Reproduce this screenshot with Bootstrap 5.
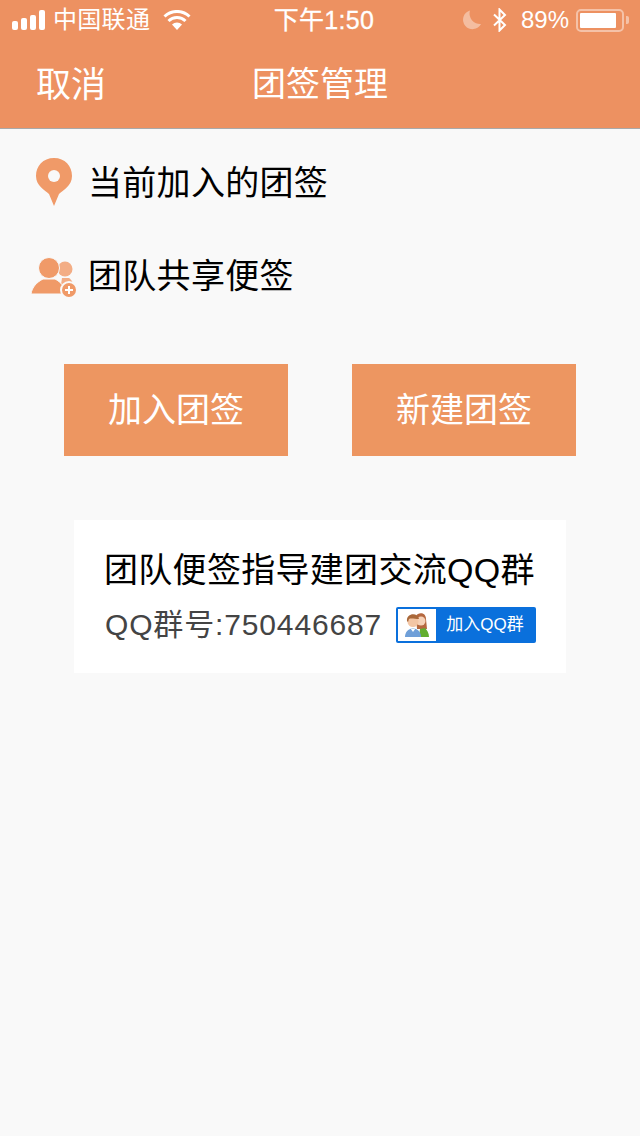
<!DOCTYPE html>
<html lang="zh">
<head>
  <meta charset="UTF-8">
  <meta name="viewport" content="width=device-width, initial-scale=1.0" />
  <title>团签管理</title>
  <link href="https://cdn.jsdelivr.net/npm/bootstrap@5.3.0/dist/css/bootstrap.min.css" rel="stylesheet">
  <style>
    body {
      background: #f9f9f9;
      font-family: "Liberation Sans", "Noto Sans CJK SC", sans-serif;
      min-height: 1136px;
      color: #000;
    }
    .top-head { background: #ed9161; height: 129px; border-bottom: 1px solid #a9a9a9; color: #fff; }
    .status-row { height: 40px; padding: 0 11px 0 12px; font-size: 24px; line-height: 42px; }
    .status-left { width: 250px; }
    .status-mid { width: 124px; font-size: 25px; letter-spacing: .3px; -webkit-text-stroke: .3px #fff; }
    .carrier { margin-left: 8px; margin-right: 13px; letter-spacing: .3px; }
    .sig-bars { height: 20px; gap: 3px; }
    .sig-bars i { display: block; width: 6px; background: #fff; border-radius: 2px; }
    .sig-1 { height: 9px; }
    .sig-2 { height: 12px; }
    .sig-3 { height: 15px; }
    .sig-4 { height: 20px; }
    .moon-ic { margin-right: 10px; }
    .batt-pct { margin-left: 13px; }
    .batt-box { width: 48px; height: 23px; border: 2px solid rgba(255,255,255,.45); border-radius: 5px; padding: 2px; margin-left: 7px; }
    .batt-fill { background: #fff; height: 100%; width: 90%; border-radius: 1px; }
    .batt-tip { width: 3px; height: 8px; background: rgba(255,255,255,.45); border-radius: 0 2px 2px 0; margin-left: 2px; }
    .title-row { height: 88px; font-size: 34px; line-height: 89px; }
    .cancel-txt { width: 252px; padding-left: 36px; font-size: 35px; }
    .info-row { font-size: 34px; line-height: 48px; height: 48px; letter-spacing: .3px; }
    .info-first { margin-top: 30px; }
    .info-second { margin-top: 45px; }
    .info-ic { width: 88px; padding-left: 30px; }
    .pin-ic { display: block; margin-left: 4px; margin-top: -3px; }
    .team-ic { display: block; margin-top: 3px; }
    .act-row { gap: 64px; margin-top: 64px; }
    .act-btn { width: 224px; height: 92px; background: #ed9661; color: #fff; font-size: 34px; border: 0; border-radius: 0; }
    .act-btn:hover { background: #ed9661; color: #fff; }
    .group-box { width: 492px; height: 153px; background: #fff; margin: 64px auto 0; padding: 26px 30px 0 30px; }
    .group-title { font-size: 34px; line-height: 48px; white-space: nowrap; letter-spacing: .3px; }
    .group-line { margin-top: 10px; }
    .group-num { font-size: 30px; line-height: 42px; color: #444; white-space: nowrap; letter-spacing: .85px; padding-left: 1px; }
    .qq-btn { width: 140px; height: 36px; background: #0a70dc; border-radius: 2px; color: #fff; font-size: 17px; padding: 2px; }
    .qq-ic { width: 38px; height: 32px; background: #fff; }
  </style>
</head>
<body>
  <div class="top-head">
    <div class="status-row d-flex align-items-center">
      <div class="status-left d-flex align-items-center">
        <div class="sig-bars d-flex align-items-end">
          <i class="sig-1"></i><i class="sig-2"></i><i class="sig-3"></i><i class="sig-4"></i>
        </div>
        <span class="carrier">中国联通</span>
        <svg width="28" height="20" viewBox="0 0 28 20">
          <path d="M14 20 L9 14.500 A7.500 7.500 0 0 1 19 14.500 Z" fill="#fff"/>
          <path d="M5.500 11 A12 12 0 0 1 22.500 11" fill="none" stroke="#fff" stroke-width="3"/>
          <path d="M1.500 6.500 A18 18 0 0 1 26.500 6.500" fill="none" stroke="#fff" stroke-width="3"/>
        </svg>
      </div>
      <div class="status-mid text-center">下午1:50</div>
      <div class="ms-auto d-flex align-items-center">
        <svg class="moon-ic" width="20" height="20" viewBox="0 0 20 20"><path d="M8 0.500 A9.500 9.500 0 1 0 19 14 A10.500 10.500 0 0 1 8 0.500 Z" fill="rgba(255,255,255,.4)"/></svg>
        <svg width="16" height="24" viewBox="0 0 16 24"><path d="M2 6.500 L13 17 L7.500 22.500 V1.500 L13 7 L2 17.500" fill="none" stroke="#fff" stroke-width="2"/></svg>
        <span class="batt-pct">89%</span>
        <div class="batt-box"><div class="batt-fill"></div></div>
        <div class="batt-tip"></div>
      </div>
    </div>
    <div class="title-row d-flex">
      <div class="cancel-txt">取消</div>
      <div>团签管理</div>
    </div>
  </div>

  <div class="info-row info-first d-flex align-items-center">
    <div class="info-ic">
      <svg class="pin-ic" width="40" height="50" viewBox="0 0 40 50">
        <path d="M20 1 C9 1 2 9 2 19 C2 29 11 33 15 37 L20 49 L25 37 C29 33 38 29 38 19 C38 9 31 1 20 1 Z" fill="#f09a68"/>
        <circle cx="20" cy="19" r="6" fill="#f9f9f9"/>
      </svg>
    </div>
    <div>当前加入的团签</div>
  </div>

  <div class="info-row info-second d-flex align-items-center">
    <div class="info-ic">
      <svg class="team-ic" width="48" height="42" viewBox="0 0 48 42">
        <circle cx="35" cy="12" r="7.500" fill="#f3ad85"/>
        <path d="M30 34 L32 21 L39 21 C42 23 44 27 44 33 Z" fill="#f3ad85"/>
        <circle cx="19" cy="11" r="10.500" fill="#f09a68" stroke="#f9f9f9" stroke-width="1"/>
        <path d="M1 37 C2 30 7 25 13 22 L25 22 C31 25 35 30 36 37 Z" fill="#f09a68" stroke="#f9f9f9" stroke-width="1"/>
        <circle cx="39" cy="33" r="8" fill="#f09a68" stroke="#f9f9f9" stroke-width="2"/>
        <path d="M35 33 H43 M39 29 V37" stroke="#fff" stroke-width="2"/>
      </svg>
    </div>
    <div>团队共享便签</div>
  </div>

  <div class="act-row d-flex justify-content-center">
    <button class="btn act-btn">加入团签</button>
    <button class="btn act-btn">新建团签</button>
  </div>

  <div class="group-box">
    <div class="group-title">团队便签指导建团交流QQ群</div>
    <div class="group-line d-flex align-items-center justify-content-between">
      <div class="group-num">QQ群号:750446687</div>
      <div class="qq-btn d-flex align-items-center">
        <div class="qq-ic d-flex align-items-center justify-content-center">
          <svg width="26" height="28" viewBox="0 0 26 28">
            <path d="M12 5 C14 1 22 1 22 8 L23 18 L13 18 Z" fill="#b5683f"/>
            <path d="M15 26 L16 18 L21 17 C23 19 25 22 25 26 Z" fill="#62ad2f"/>
            <circle cx="17" cy="10" r="4.500" fill="#f6d2b8"/>
            <path d="M1 26 C1 21 4 18 9 17 C14 18 17 21 17 26 Z" fill="#6f9fd8"/>
            <path d="M6.500 17.500 L9 21 L11.500 17.500 Z" fill="#fff"/>
            <circle cx="9" cy="10.500" r="5.500" fill="#f3c6a5"/>
            <path d="M3 10 C2 2 14 1 15 8 C11 8 7 7 5 8 L4 11 Z" fill="#a9683a"/>
          </svg>
        </div>
        <div class="flex-grow-1 text-center">加入QQ群</div>
      </div>
    </div>
  </div>

  <script src="https://cdn.jsdelivr.net/npm/bootstrap@5.3.0/dist/js/bootstrap.bundle.min.js"></script>
</body>
</html>
